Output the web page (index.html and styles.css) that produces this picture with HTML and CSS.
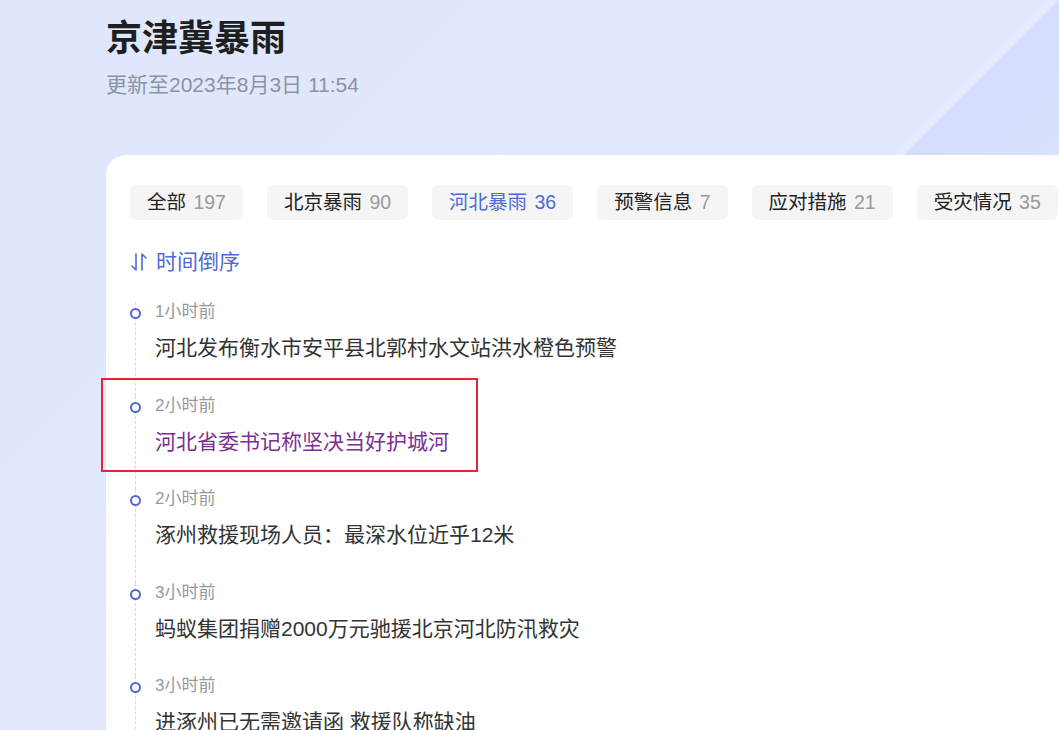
FILE: index.html
```html
<!DOCTYPE html>
<html lang="zh-CN">
<head>
    <meta charset="UTF-8">
    <title>京津冀暴雨</title>
    <link rel="stylesheet" href="styles.css">
</head>
<body>
    <div class="page">
        <!-- 标题 -->
        <header class="head">
            <h1>京津冀暴雨</h1>
            <p class="updated">更新至2023年8月3日 11:54</p>
        </header>

        <!-- 内容卡片 -->
        <main class="card">
            <nav class="tabs">
                <span class="tab">全部 <em>197</em></span>
                <span class="tab">北京暴雨 <em>90</em></span>
                <span class="tab active">河北暴雨 <em>36</em></span>
                <span class="tab">预警信息 <em>7</em></span>
                <span class="tab">应对措施 <em>21</em></span>
                <span class="tab">受灾情况 <em>35</em></span>
            </nav>

            <div class="sort">
                <svg width="18" height="20" viewBox="0 0 18 20" fill="none" stroke="currentColor" stroke-width="1.6" stroke-linecap="round" stroke-linejoin="round">
                    <path d="M6 2v16l-4-4"/>
                    <path d="M12 18V2l4 4"/>
                </svg>
                时间倒序
            </div>

            <ul class="timeline">
                <li>
                    <span class="time">1小时前</span>
                    <a class="title">河北发布衡水市安平县北郭村水文站洪水橙色预警</a>
                </li>
                <li class="marked">
                    <span class="time">2小时前</span>
                    <a class="title visited">河北省委书记称坚决当好护城河</a>
                </li>
                <li>
                    <span class="time">2小时前</span>
                    <a class="title">涿州救援现场人员：最深水位近乎12米</a>
                </li>
                <li>
                    <span class="time">3小时前</span>
                    <a class="title">蚂蚁集团捐赠2000万元驰援北京河北防汛救灾</a>
                </li>
                <li>
                    <span class="time">3小时前</span>
                    <a class="title">进涿州已无需邀请函 救援队称缺油</a>
                </li>
            </ul>
        </main>
    </div>
</body>
</html>
```

FILE: styles.css
```css
/* 全局 */
body {
    margin: 0;
    font-family: "Liberation Sans", "Noto Sans CJK SC", sans-serif;
    background: linear-gradient(135deg, #dfe7fd 0, #e2e9fe 58.6%, #e7edfe 59%, #d4ddfb 59.3%, #dae2fc 70%, #e0e8fd 100%);
    height: 730px;
    overflow: hidden;
}

.page {
    padding-left: 106px;
}

/* 标题区 */
.head h1 {
    margin: 0;
    padding-top: 17px;
    font-size: 36px;
    line-height: 44px;
    font-weight: bold;
    color: #1f1f1f;
}

.updated {
    margin: 11px 0 0;
    font-size: 21px;
    line-height: 26px;
    color: #8c93a3;
}

/* 卡片 */
.card {
    margin-top: 57px;
    background: #fff;
    border-radius: 20px 0 0 0;
    padding: 30px 0 0 24px;
    height: 600px;
}

.tabs {
    display: flex;
    gap: 24px;
    white-space: nowrap;
}

.tab {
    background: #f5f5f6;
    border-radius: 6px;
    padding: 0 17px;
    height: 35px;
    line-height: 35px;
    font-size: 19.5px;
    color: #222;
}

.tab em {
    font-style: normal;
    color: #9a9a9a;
    margin-left: 2px;
}

.tab.active,
.tab.active em {
    color: #4e6ad6;
}

.sort {
    display: flex;
    align-items: center;
    gap: 8px;
    margin-top: 28px;
    font-size: 21px;
    line-height: 28px;
    color: #4e6ad6;
}

/* 时间线 */
.timeline {
    list-style: none;
    margin: 26px 0 0;
    padding: 0 0 0 5px;
}

.timeline li {
    position: relative;
    border-left: 1px dashed #d8d8d8;
    padding: 0 0 33.5px 19px;
}

.timeline li::before {
    content: "";
    position: absolute;
    left: -6px;
    top: 6px;
    width: 7px;
    height: 7px;
    border: 2px solid #5567d0;
    border-radius: 50%;
    background: #fff;
}

.time {
    display: block;
    font-size: 17px;
    line-height: 20px;
    color: #999;
}

.title {
    display: block;
    margin-top: 12px;
    font-size: 21px;
    line-height: 28px;
    color: #333;
}

.title.visited {
    color: #7b2f93;
}

/* 标注框 */
.marked::after {
    content: "";
    position: absolute;
    left: -35px;
    top: -18px;
    width: 373px;
    height: 90px;
    border: 2px solid #e3262f;
}
```
